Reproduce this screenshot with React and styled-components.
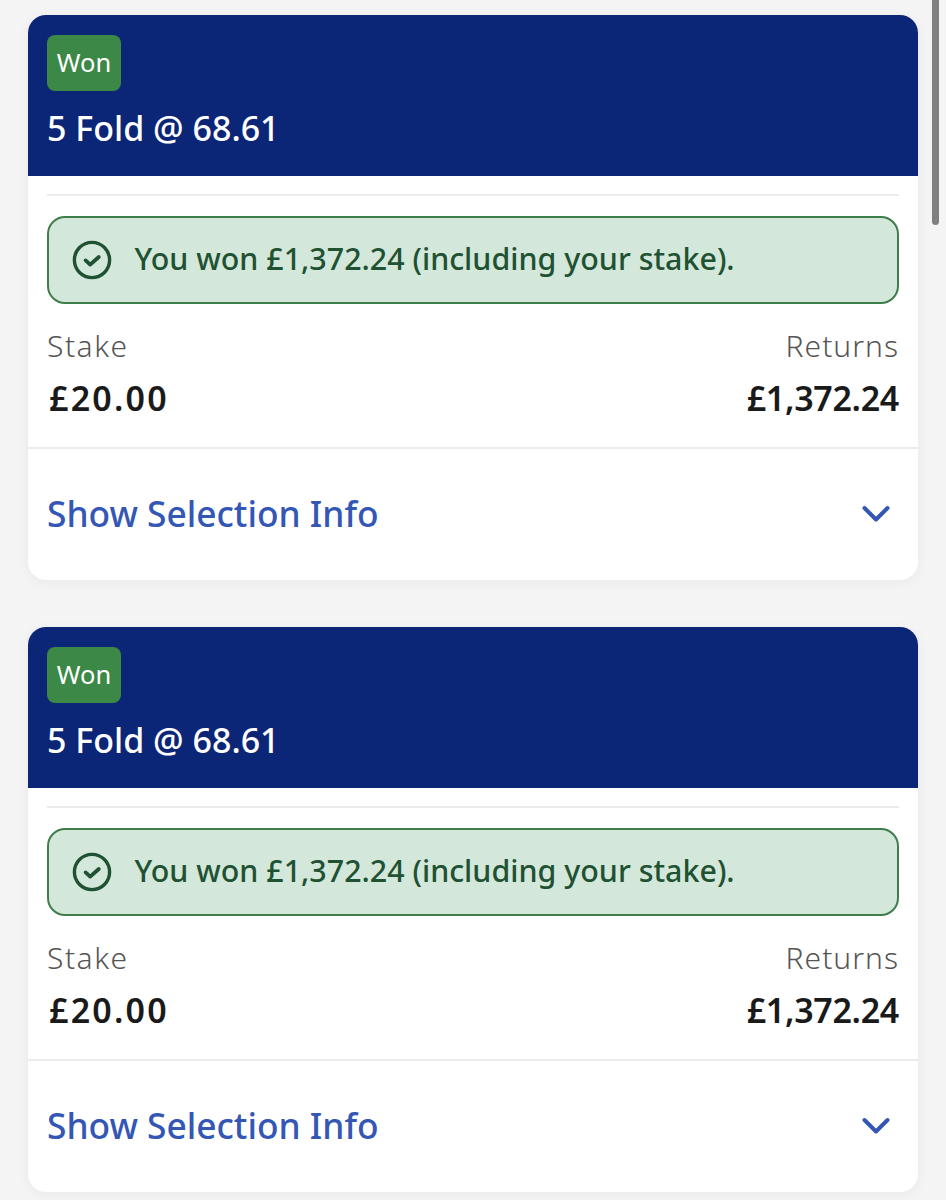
import React from 'react';
import styled, { createGlobalStyle } from 'styled-components';

const GlobalStyle = createGlobalStyle`
  html, body {
    margin: 0;
    height: 1200px;
    overflow: hidden;
    background: #f4f4f5;
    font-family: 'Noto Sans', 'Open Sans', sans-serif;
  }
`;

const Page = styled.div`
  position: relative;
  height: 1200px;
  padding: 15px 28px 0;
  box-sizing: border-box;
  display: flex;
  flex-direction: column;
  gap: 47px;
`;

const ScrollThumb = styled.div`
  position: absolute;
  top: -10px;
  right: 7px;
  width: 7px;
  height: 235px;
  border-radius: 4px;
  background: #808080;
`;

const Card = styled.section`
  width: 890px;
  height: 565px;
  flex: none;
  background: #fff;
  border-radius: 18px;
  overflow: hidden;
  box-shadow: 0 2px 12px rgba(0, 0, 0, 0.05);
`;

const Header = styled.header`
  height: 161px;
  box-sizing: border-box;
  padding: 20px 19px 0;
  background: #0c2677;
  color: #fff;
`;

const Badge = styled.div`
  width: 74px;
  height: 56px;
  padding-bottom: 2px;
  box-sizing: border-box;
  display: flex;
  align-items: center;
  justify-content: center;
  border-radius: 8px;
  background: #3c8846;
  font-size: 25.5px;
`;

const Title = styled.h2`
  margin: 14px 0 0;
  font-size: 34px;
  line-height: 46px;
  font-weight: 500;
`;

const Body = styled.div`
  padding: 18px 19px 0;
`;

const Rule = styled.div`
  height: 2px;
  background: #ebebeb;
`;

const Banner = styled.div`
  height: 88px;
  margin-top: 20px;
  box-sizing: border-box;
  display: flex;
  align-items: center;
  gap: 23px;
  padding-left: 22.5px;
  border: 2.5px solid #3f7d4b;
  border-radius: 18px;
  background: #d3e7da;
  color: #1f5232;
  font-size: 30.4px;
  font-weight: 500;
`;

const BannerText = styled.span`
  padding-bottom: 4px;
`;

const Amounts = styled.div`
  display: flex;
  justify-content: space-between;
  margin-top: 22px;
  height: 121px;
`;

const Amount = styled.div`
  display: flex;
  flex-direction: column;
  align-items: ${p => (p.$right ? 'flex-end' : 'flex-start')};
`;

const Label = styled.div`
  font-size: 30px;
  line-height: 40px;
  font-weight: 300;
  letter-spacing: ${p => p.$spacing}px;
  color: #555;
`;

const Value = styled.div`
  margin: 9px 0 0 ${p => (p.$spacing ? 2 : 0)}px;
  font-size: 34px;
  line-height: 46px;
  font-weight: 600;
  letter-spacing: ${p => p.$spacing || -0.3}px;
  color: #1a1a1a;
`;

const Footer = styled.div`
  display: flex;
  align-items: center;
  justify-content: space-between;
  height: 131px;
  padding: 0 28px 2px 19px;
  box-sizing: border-box;
  border-top: 2px solid #ebebeb;
  color: #3456b5;
`;

const ShowInfo = styled.span`
  font-size: 35.3px;
  font-weight: 500;
`;

const ChevronSvg = styled.svg`
  margin-top: 3px;
`;

const CheckIcon = () => (
  <svg width="40" height="40" viewBox="0 0 40 40" fill="none" stroke="#1f5232" strokeWidth="3.4">
    <circle cx="20" cy="20" r="17.6" />
    <path d="M13.6 20.4l4.6 4.2 8.6-7.6" strokeWidth="3.8" strokeLinecap="round" strokeLinejoin="round" />
  </svg>
);

const ChevronIcon = () => (
  <ChevronSvg width="28" height="18" viewBox="0 0 28 18" fill="none" stroke="#3456b5" strokeWidth="4">
    <path d="M2.5 3L14 14.5 25.5 3" strokeLinecap="round" strokeLinejoin="round" />
  </ChevronSvg>
);

const BetCard = () => (
  <Card>
    <Header>
      <Badge>Won</Badge>
      <Title>5 Fold @ 68.61</Title>
    </Header>
    <Body>
      <Rule />
      <Banner>
        <CheckIcon />
        <BannerText>You won £1,372.24 (including your stake).</BannerText>
      </Banner>
      <Amounts>
        <Amount>
          <Label $spacing={1.5}>Stake</Label>
          <Value $spacing={2.2}>£20.00</Value>
        </Amount>
        <Amount $right>
          <Label $spacing={1}>Returns</Label>
          <Value>£1,372.24</Value>
        </Amount>
      </Amounts>
    </Body>
    <Footer>
      <ShowInfo>Show Selection Info</ShowInfo>
      <ChevronIcon />
    </Footer>
  </Card>
);

const App = () => (
  <Page>
    <GlobalStyle />
    <ScrollThumb />
    <BetCard />
    <BetCard />
  </Page>
);

export default App;
